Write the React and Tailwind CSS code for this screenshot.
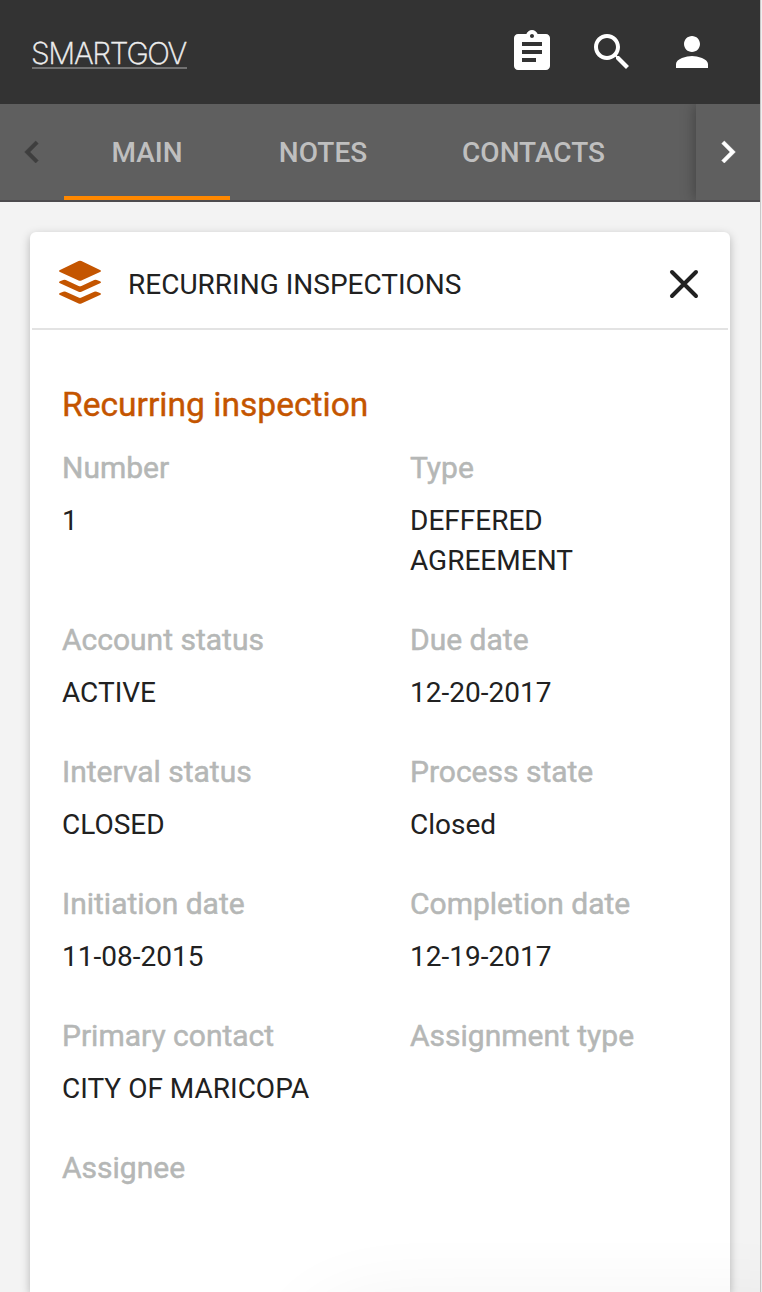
import React from "react";
import { MdAssignment, MdPerson } from "react-icons/md";

const fields = [
  ["Number", "1"],
  ["Type", "DEFFERED AGREEMENT"],
  ["Account status", "ACTIVE"],
  ["Due date", "12-20-2017"],
  ["Interval status", "CLOSED"],
  ["Process state", "Closed"],
  ["Initiation date", "11-08-2015"],
  ["Completion date", "12-19-2017"],
  ["Primary contact", "CITY OF MARICOPA"],
  ["Assignment type", ""],
  ["Assignee", ""],
];

function SearchIcon() {
  return (
    <svg className="size-12" viewBox="0 0 24 24" fill="currentColor">
      <path d="M15.5 14h-.79l-.28-.27C15.41 12.59 16 11.11 16 9.5 16 5.91 13.09 3 9.5 3S3 5.91 3 9.5 5.91 16 9.5 16c1.61 0 3.09-.59 4.23-1.57l.27.28v.79l5 4.99L20.49 19l-4.99-5zm-6 0C7.01 14 5 11.99 5 9.5S7.01 5 9.5 5 14 7.01 14 9.5 11.99 14 9.5 14z" />
    </svg>
  );
}

function StackIcon() {
  return (
    <svg className="h-11 w-11" viewBox="0 0 44 44" fill="currentColor">
      <path d="M20.6 1.1Q22 .4 23.4 1.1L42 10Q44 11 42 12L23.4 20.4Q22 21 20.6 20.4L2 12Q0 11 2 10Z" />
      <path d="M2 21.3L5.200 20Q6.500 19.500 7.800 20L20.600 25.900Q22 26.500 23.400 25.900L36.200 20Q37.500 19.500 38.800 20L42 21.300Q44 22.300 42 23.300L23.400 31.700Q22 32.300 20.600 31.700L2 23.300Q0 22.300 2 21.300Z" />
      <path d="M2 33L5.200 31.700Q6.500 31.200 7.800 31.700L20.600 37.600Q22 38.200 23.400 37.600L36.200 31.700Q37.500 31.200 38.800 31.700L42 33Q44 34 42 35L23.400 43.400Q22 44 20.600 43.400L2 35Q0 34 2 33Z" />
    </svg>
  );
}

export default function App() {
  return (
    <div className="relative flex h-[1292px] w-[762px] overflow-hidden bg-[#f3f3f3] font-['Roboto',sans-serif]">
      <div className="flex w-[760px] flex-col">
        <header className="flex h-[104px] shrink-0 items-center justify-between bg-[#333] pr-11 pl-8 text-white">
          <div className="mt-[5px] h-[29px] w-[155px] border-b-2 border-[#717171] font-['Inter',sans-serif] text-[30px] leading-[26px] font-extralight tracking-[-1.3px] whitespace-nowrap text-[#eee] [-webkit-text-stroke:0.4px_#eee]">
            <span className="-ml-px">SMARTGOV</span>
          </div>
          <div className="flex gap-8">
            <MdAssignment className="size-12" />
            <SearchIcon />
            <MdPerson className="size-12" />
          </div>
        </header>
        <nav className="flex h-[98px] shrink-0 overflow-hidden border-b-2 border-[#4d4b4e] bg-[#5f5f5f] text-[28px] font-medium text-[#bfbfbf]">
          <div className="flex w-16 items-center justify-center text-[#3e3e3e]">
            <svg className="size-11" viewBox="0 0 24 24" fill="currentColor" stroke="currentColor" strokeWidth="0.3">
              <path d="M15.410 7.410L14 6l-6 6 6 6 1.410-1.410L10.830 12z" />
            </svg>
          </div>
          <div className="flex w-[166px] items-center justify-center border-b-4 border-[#ff8800] pt-1.5">MAIN</div>
          <div className="flex w-[185px] items-center justify-center pt-0.5 pl-px">NOTES</div>
          <div className="flex w-[237px] items-center justify-center pt-0.5">CONTACTS</div>
          <div className="ml-auto flex w-16 items-center justify-center text-white shadow-[0_0_14px_rgba(0,0,0,0.35)]">
            <svg className="size-11" viewBox="0 0 24 24" fill="currentColor" stroke="currentColor" strokeWidth="0.3">
              <path d="M8.590 16.590L13.170 12 8.590 7.410 10 6l6 6-6 6z" />
            </svg>
          </div>
        </nav>
        <main className="mx-[30px] mt-[30px] flex grow flex-col rounded-t-md bg-white text-[#212121] shadow-[0_3px_10px_rgba(0,0,0,0.26)]">
          <div className="mx-0.5 flex h-[98px] shrink-0 items-center border-b-2 border-[#e3e3e3] pr-[29px] pl-[26px]">
            <span className="mt-1 text-[#c45500]">
              <StackIcon />
            </span>
            <h1 className="mt-2.5 ml-[26px] grow text-[28px]">RECURRING INSPECTIONS</h1>
            <svg className="mt-2 size-[30px]" viewBox="0 0 30 30" fill="none" stroke="currentColor" strokeWidth="4" strokeLinecap="round">
              <path d="M3 3L27 27M27 3L3 27" />
            </svg>
          </div>
          <section className="px-8 pt-[55px]">
            <h2 className="text-[33.6px] leading-10 text-[#c45500] [-webkit-text-stroke:0.4px_#c45500]">Recurring inspection</h2>
            <dl className="mt-[23px] grid grid-cols-[288px_288px] gap-x-[60px]">
              {fields.map(([label, value]) => (
                <div key={label} className="pb-[39px]">
                  <dt className="text-[30px] leading-10 text-[#b5b7b6] [-webkit-text-stroke:0.5px_#b5b7b6]">{label}</dt>
                  <dd className="mt-[13px] min-h-10 text-[28px] leading-10">{value}</dd>
                </div>
              ))}
            </dl>
          </section>
        </main>
      </div>
      <div className="w-px bg-[#c8c8c8]" />
      <div className="w-px bg-[#f0f0f0]" />
      <div className="pointer-events-none absolute top-[1332px] right-[-60px] left-[330px] h-20 rounded-full shadow-[0_0_90px_20px_rgba(0,0,0,0.07)]" />
    </div>
  );
}
